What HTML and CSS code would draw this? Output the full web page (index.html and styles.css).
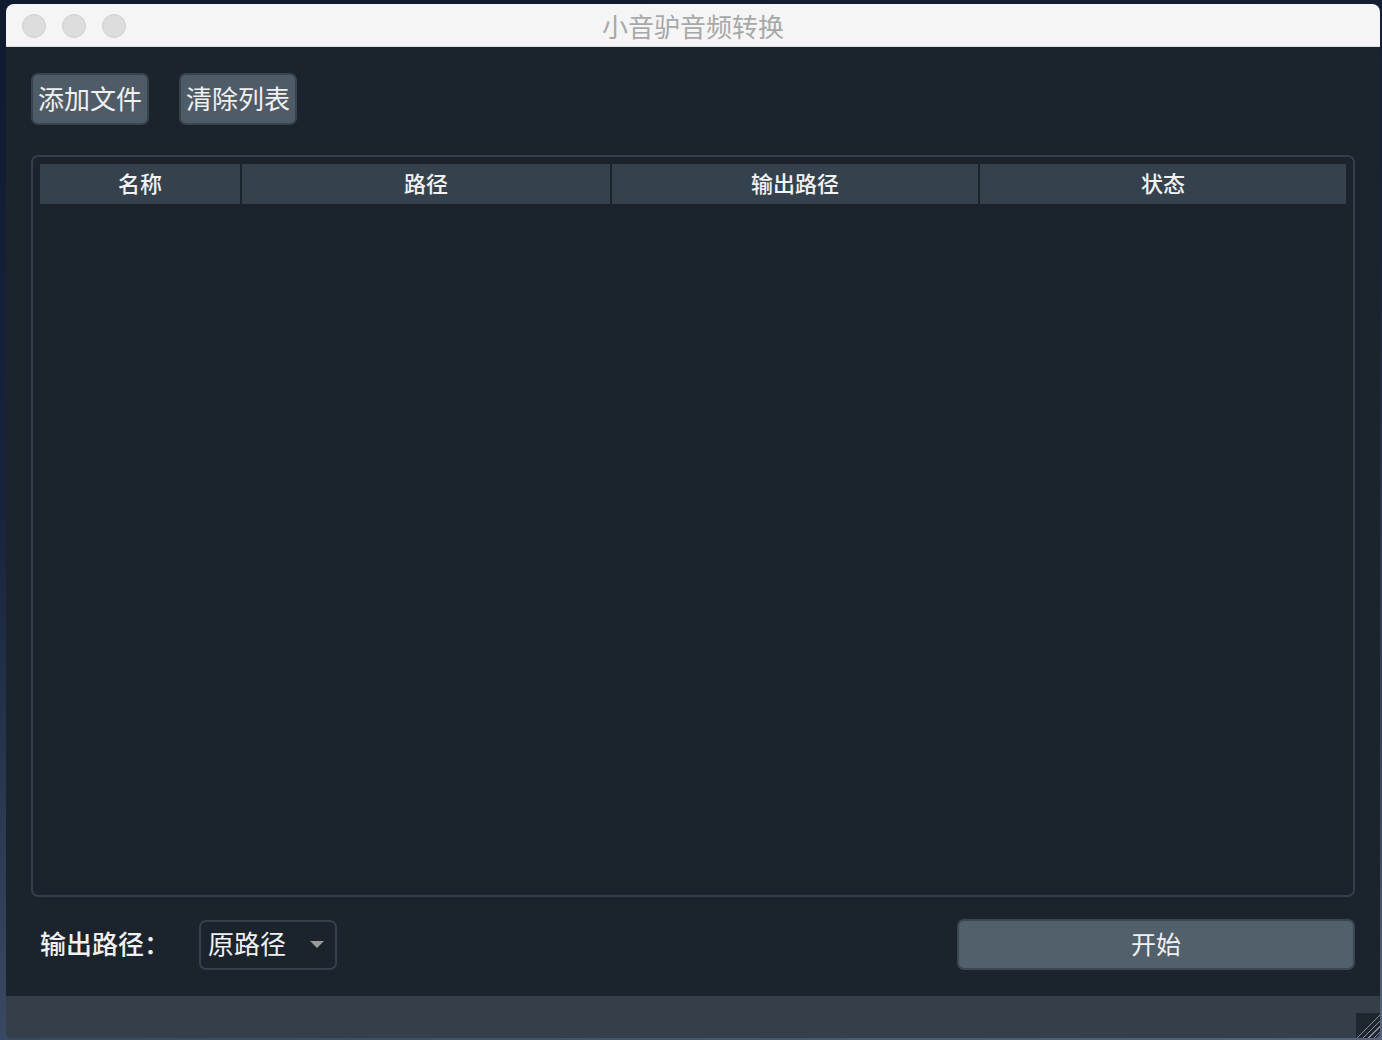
FILE: index.html
```html
<!doctype html>
<html>

<head>
    <title>小音驴音频转换</title>
    <meta charset="utf-8">
    <link rel="stylesheet" href="styles.css">
</head>

<body>
    <div class="window">
        <div class="titlebar">
            <div class="lights">
                <span class="light"></span>
                <span class="light"></span>
                <span class="light"></span>
            </div>
            <div class="title">小音驴音频转换</div>
        </div>
        <div class="content">
            <div class="toolbar">
                <span class="button">添加文件</span>
                <span class="button">清除列表</span>
            </div>
            <div class="frame">
                <div class="header">
                    <span>名称</span>
                    <span>路径</span>
                    <span>输出路径</span>
                    <span>状态</span>
                </div>
            </div>
            <div class="bottom">
                <span class="label">输出路径：</span>
                <div class="combo">
                    <span>原路径</span>
                    <span class="arrow"></span>
                </div>
                <span class="start">开始</span>
            </div>
        </div>
        <div class="status">
            <span class="grip"></span>
        </div>
    </div>
</body>

</html>
```

FILE: styles.css
```css
* {
    box-sizing: border-box;
}

body {
    margin: 0;
    height: 1040px;
    overflow: hidden;
    background: linear-gradient(170deg, #0f1a30 0%, #18243c 40%, #3d4c68 85%, #56657f 100%);
    font-family: "Noto Sans CJK SC", "Noto Sans", sans-serif;
}

.window {
    margin: 4px 2px 0 6px;
    width: 1374px;
    height: 1034px;
    display: flex;
    flex-direction: column;
    background: #1b232d;
    border-radius: 8px 8px 6px 6px;
    overflow: hidden;
}

.titlebar {
    height: 43px;
    background: #f5f5f5;
    border-bottom: 1px solid #dcdcdc;
    display: flex;
    align-items: center;
    position: relative;
}

.lights {
    display: flex;
    gap: 16px;
    padding-left: 16px;
    padding-top: 2px;
}

.light {
    width: 24px;
    height: 24px;
    border-radius: 50%;
    background: #dddddd;
    border: 1px solid #d0d0d0;
}

.title {
    position: absolute;
    left: 0;
    right: 0;
    top: 0;
    line-height: 43px;
    text-align: center;
    font-size: 26px;
    color: #a8a8a8;
}

.content {
    flex: 1;
    display: flex;
    flex-direction: column;
    padding: 26px 25px 26px 25px;
}

.toolbar {
    display: flex;
    gap: 30px;
    height: 52px;
}

.button {
    width: 118px;
    height: 52px;
    display: flex;
    align-items: center;
    justify-content: center;
    padding-bottom: 4px;
    background: #4f5c68;
    border: 2px solid #37434e;
    border-radius: 7px;
    color: #f0f0f0;
    font-size: 26px;
}

.frame {
    flex: 1;
    margin: 30px 0 22px;
    border: 2px solid #33404b;
    border-radius: 7px;
    padding: 7px;
}

.header {
    display: grid;
    grid-template-columns: 200px 368px 366px 366px;
    gap: 2px;
    height: 40px;
}

.header span {
    display: flex;
    align-items: center;
    justify-content: center;
    padding-bottom: 5px;
    background: #35424d;
    color: #f2f2f2;
    font-size: 22px;
    font-weight: 500;
}

.bottom {
    display: flex;
    align-items: center;
    height: 51px;
    padding-left: 9px;
}

.label {
    width: 159px;
    padding-bottom: 4px;
    color: #f0f0f0;
    font-size: 26px;
    font-weight: 500;
}

.combo {
    width: 138px;
    height: 50px;
    border: 2px solid #34414c;
    border-radius: 7px;
    display: flex;
    align-items: center;
    justify-content: space-between;
    padding: 0 11px 4px 7px;
    color: #f0f0f0;
    font-size: 26px;
}

.arrow {
    width: 0;
    height: 0;
    margin-top: 4px;
    border-left: 7px solid transparent;
    border-right: 7px solid transparent;
    border-top: 7px solid #9a9a9a;
}

.start {
    margin-left: auto;
    width: 398px;
    height: 51px;
    display: flex;
    align-items: center;
    justify-content: center;
    padding-bottom: 4px;
    background: #52606b;
    border: 2px solid #3a4751;
    border-radius: 7px;
    color: #f0f0f0;
    font-size: 25px;
}

.status {
    height: 42px;
    background: #343f4a;
    display: flex;
    justify-content: flex-end;
    align-items: flex-end;
}

.grip {
    width: 24px;
    height: 25px;
    background:
        linear-gradient(to bottom right, #1e2630 50%, transparent 50%),
        repeating-linear-gradient(135deg, #1e2630 0 2px, #8a9098 2px 3px, #1e2630 3px 4px);
}
```
